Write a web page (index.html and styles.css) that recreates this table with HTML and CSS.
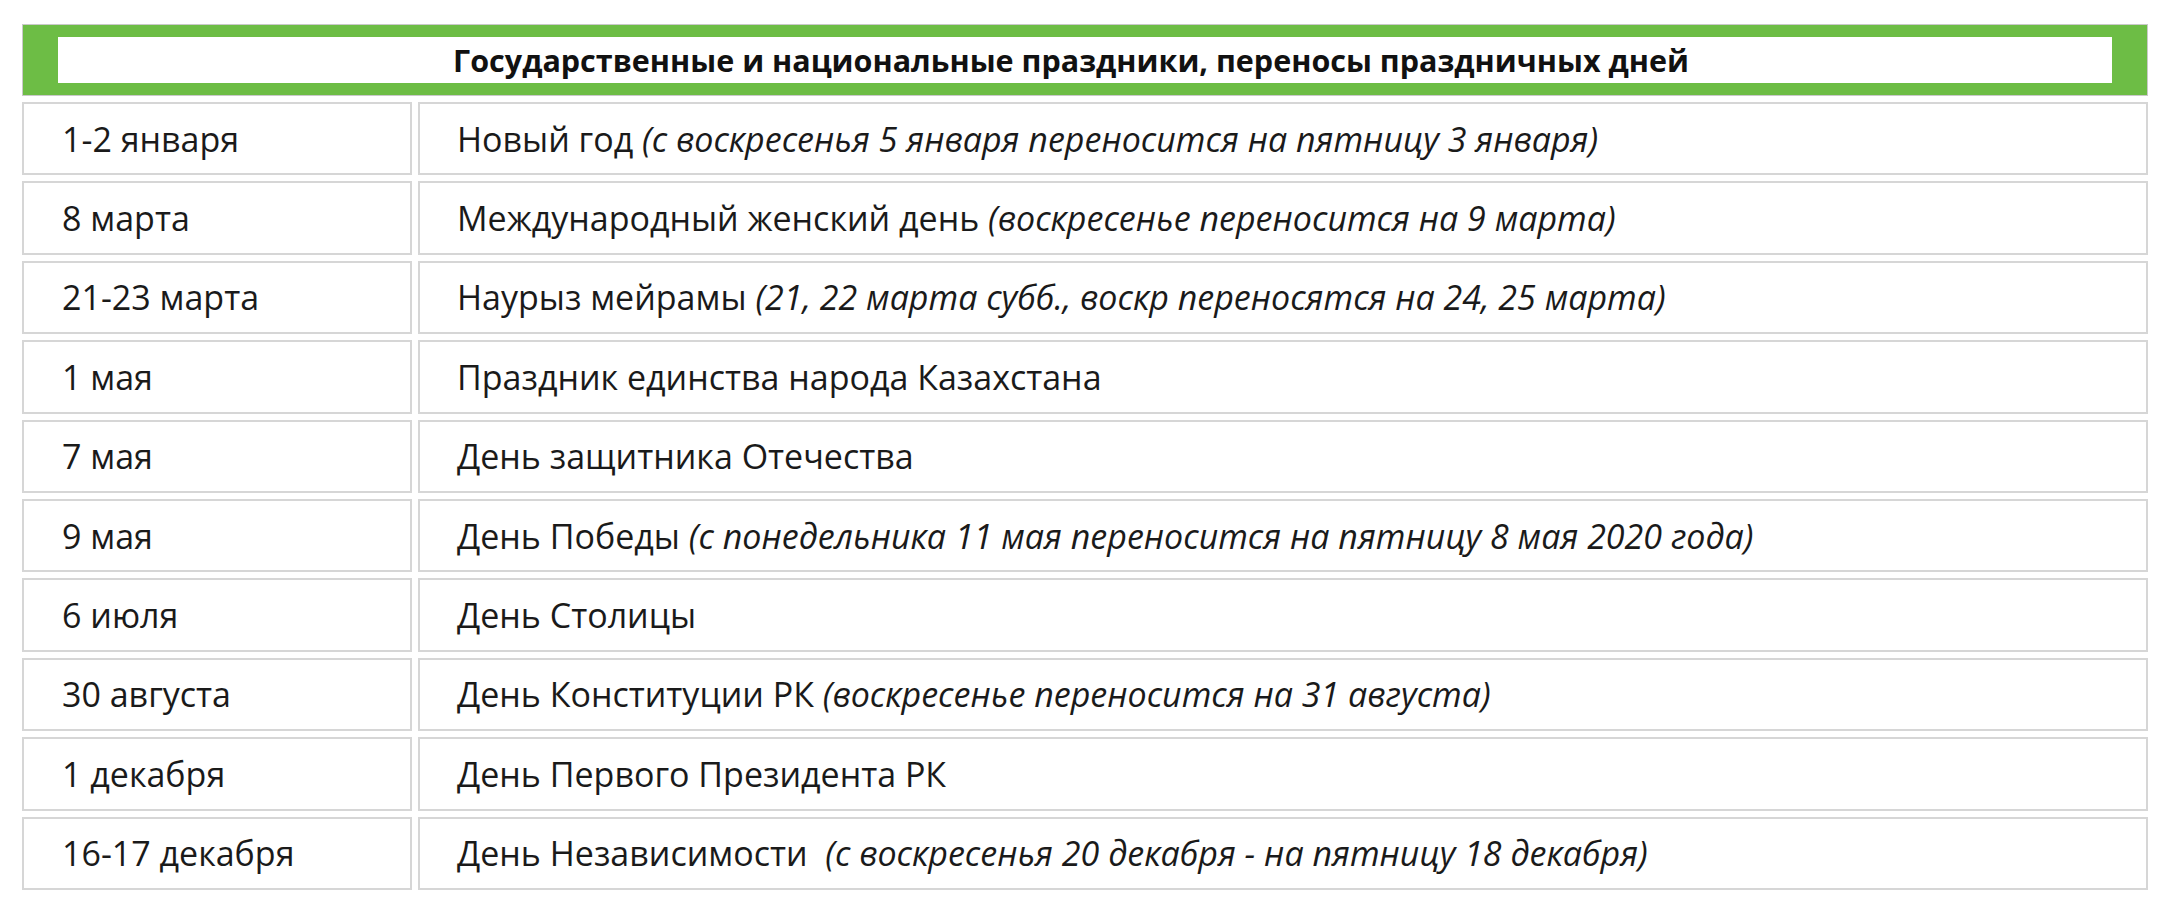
FILE: index.html
```html
<!DOCTYPE html>
<html lang="ru">
<head>
<meta charset="utf-8">
<title>Праздники</title>
<link rel="stylesheet" href="styles.css">
</head>
<body>
<table class="holidays">
  <colgroup>
    <col class="col-date">
    <col class="col-name">
  </colgroup>
  <thead>
    <tr>
      <th class="head-cell" colspan="2"><div class="head-inner">Государственные и национальные праздники, переносы праздничных дней</div></th>
    </tr>
  </thead>
  <tbody>
    <tr><td class="date">1-2 января</td><td class="name">Новый год <i>(с воскресенья 5 января переносится на пятницу 3 января)</i></td></tr>
    <tr><td class="date">8 марта</td><td class="name">Международный женский день <i>(воскресенье переносится на 9 марта)</i></td></tr>
    <tr><td class="date">21-23 марта</td><td class="name">Наурыз мейрамы <i>(21, 22 марта субб., воскр переносятся на 24, 25 марта)</i></td></tr>
    <tr><td class="date">1 мая</td><td class="name">Праздник единства народа Казахстана</td></tr>
    <tr><td class="date">7 мая</td><td class="name">День защитника Отечества</td></tr>
    <tr><td class="date">9 мая</td><td class="name">День Победы <i>(с понедельника 11 мая переносится на пятницу 8 мая 2020 года)</i></td></tr>
    <tr><td class="date">6 июля</td><td class="name">День Столицы</td></tr>
    <tr><td class="date">30 августа</td><td class="name">День Конституции РК <i>(воскресенье переносится на 31 августа)</i></td></tr>
    <tr><td class="date">1 декабря</td><td class="name">День Первого Президента РК</td></tr>
    <tr><td class="date">16-17 декабря</td><td class="name">День Независимости &nbsp;<i>(с воскресенья 20 декабря - на пятницу 18 декабря)</i></td></tr>
  </tbody>
</table>
</body>
</html>
```

FILE: styles.css
```css
html, body {
  margin: 0;
  padding: 0;
  background: #ffffff;
}

body {
  font-family: "Open Sans", "Noto Sans", sans-serif;
  color: #1a1a1a;
}

.holidays {
  margin: 18px 0 0 16px;
  width: 2138px;
  border-collapse: separate;
  border-spacing: 6px;
  table-layout: fixed;
}

.col-date {
  width: 390px;
}

.head-cell {
  background: #6dbd45;
  border: 1px solid #c9c9c9;
  padding: 12px 35px;
}

.head-inner {
  background: #ffffff;
  height: 46px;
  line-height: 46px;
  padding-right: 28px;
  text-align: center;
  font-size: 30.5px;
  font-weight: 700;
  color: #111;
  white-space: nowrap;
}

.holidays td {
  border: 2px solid #d6d6d6;
  height: 69.4px;
  padding: 0 0 0 38px;
  font-size: 34px;
  vertical-align: middle;
  white-space: nowrap;
}

.holidays td.name {
  padding-left: 37px;
}

.holidays i {
  font-style: italic;
}
```
